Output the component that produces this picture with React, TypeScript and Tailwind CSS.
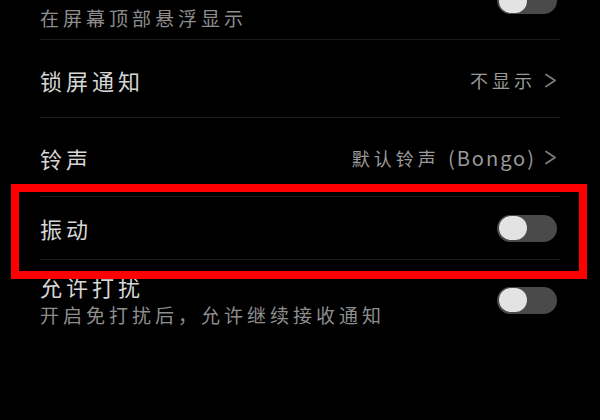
import React from 'react';

const Toggle = () => (
  <div className="flex h-[27px] w-[60px] shrink-0 items-center rounded-full bg-[#4a4a4a]">
    <div className="ml-[2px] h-[24px] w-[28px] rounded-full bg-[#e3e3e3]" />
  </div>
);

const Chevron = () => (
  <svg width="13" height="15" viewBox="0 0 13 15" fill="none" className="shrink-0">
    <path d="M2 1.5 L11 7.5 L2 13.5" stroke="#7c7c7c" strokeWidth="1.8" strokeLinecap="round" strokeLinejoin="round" />
  </svg>
);

interface RowProps {
  title: string;
  subtitle?: string;
  value?: string;
  latin?: string;
  toggle?: boolean;
  height?: string;
  last?: boolean;
}

const Row = ({ title, subtitle, value, latin, toggle, height, last }: RowProps) => {
  return (
    <div
      className={`flex items-center justify-between pr-[3px] ${last ? '' : 'border-b border-[#1c1c1c]'} ${
        subtitle ? 'pt-[12px] pb-[8px]' : height
      }`}
    >
      <div className="flex flex-col">
        <p className="text-[22px] leading-[28px] tracking-[4px] text-[#d6d6d6]">{title}</p>
        {subtitle && <p className="mt-[2px] text-[19px] leading-[26px] tracking-[4px] text-[#8e8e8e]">{subtitle}</p>}
      </div>
      {toggle && <Toggle />}
      {value && (
        <div className="flex items-center gap-[8px]">
          <span className="text-[18px] leading-[24px] tracking-[4px] text-[#9a9a9a]">
            {value}
            {latin && <span className="text-[20px] tracking-[2px]">{latin}</span>}
          </span>
          <Chevron />
        </div>
      )}
    </div>
  );
};

export default function App() {
  return (
    <div
      className="relative h-[420px] w-[600px] overflow-hidden bg-black"
      style={{ fontFamily: '"Noto Sans CJK SC", "Noto Sans", sans-serif' }}
    >
      <div className="mx-[40px]">
        {/* row scrolled past the top edge: only its subtitle and switch show */}
        <div className="-mt-[13px] flex items-start justify-between border-b border-[#1c1c1c] pr-[3px] pb-[8px]">
          <p className="mt-[18px] text-[19px] leading-[26px] tracking-[4px] text-[#8e8e8e]">在屏幕顶部悬浮显示</p>
          <Toggle />
        </div>
        <Row title="锁屏通知" value="不显示" height="h-[78px] pt-[3px]" />
        <Row title="铃声" value="默认铃声 " latin="(Bongo)" height="h-[79px] pt-[1px]" />
        <Row title="振动" toggle height="h-[63px]" />
        <Row title="允许打扰" subtitle="开启免打扰后，允许继续接收通知" toggle last />
      </div>
      {/* annotation box */}
      <div className="absolute left-[11px] top-[184px] h-[95px] w-[576px] border-[8px] border-[#ff0000]" />
    </div>
  );
}
